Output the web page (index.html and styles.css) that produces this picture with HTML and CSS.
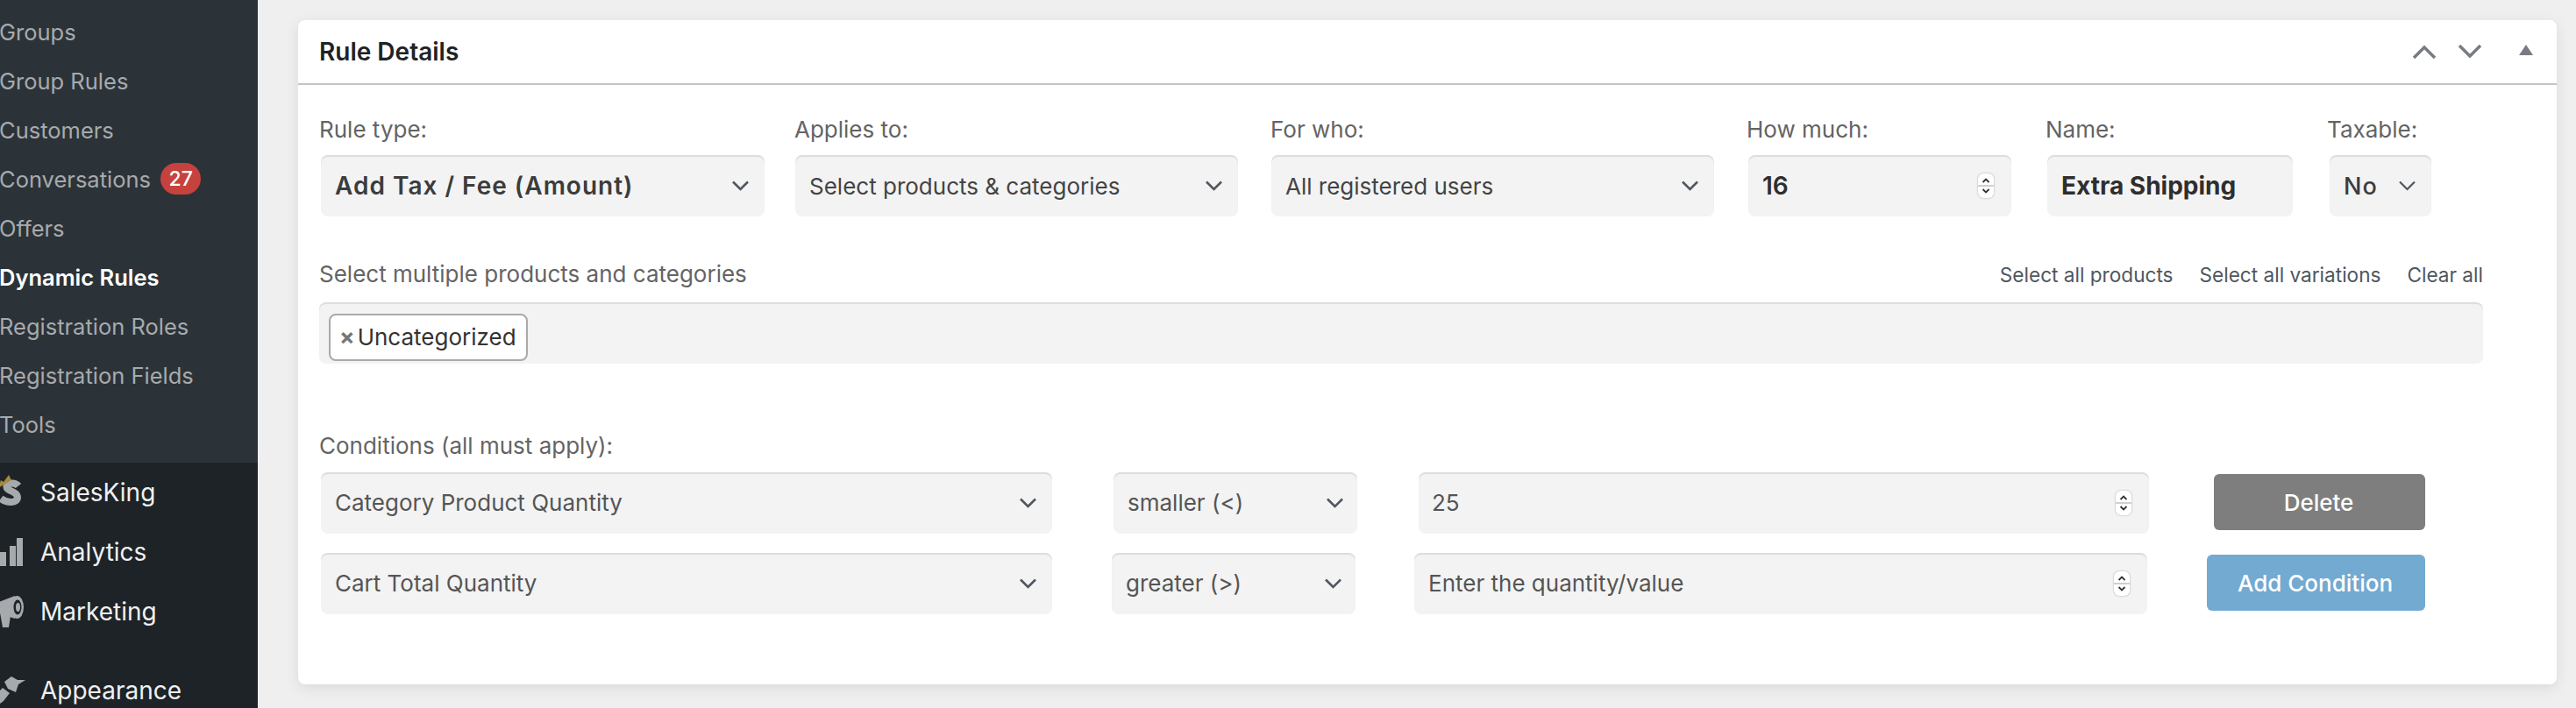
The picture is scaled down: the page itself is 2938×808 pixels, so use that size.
FILE: index.html
```html
<!DOCTYPE html>
<html lang="en">
<head>
<meta charset="utf-8">
<title>Rule Details</title>
<link rel="stylesheet" href="styles.css">
</head>
<body>
<aside class="sidebar">
  <nav class="submenu">
    <a class="sub-item">Groups</a>
    <a class="sub-item">Group Rules</a>
    <a class="sub-item">Customers</a>
    <a class="sub-item">Conversations <span class="badge">27</span></a>
    <a class="sub-item">Offers</a>
    <a class="sub-item current">Dynamic Rules</a>
    <a class="sub-item">Registration Roles</a>
    <a class="sub-item">Registration Fields</a>
    <a class="sub-item">Tools</a>
  </nav>
  <nav class="mainmenu">
    <a class="main-item">
      <svg class="menu-icon" viewBox="0 0 26 40"><path d="M21 12.500C18 8.500 9 8 7.500 13C6.500 18.500 19.500 18 20 25.500C20 32.500 8 32.500 1 27" fill="none" stroke="#a7aaad" stroke-width="8"/><path d="M-2 15L1 6L4 8L10 0L13 6Z" fill="#a68a3c"/></svg>
      <span>SalesKing</span>
    </a>
    <a class="main-item">
      <svg class="menu-icon" viewBox="0 0 26 40"><path d="M0 20h7v16H0zM11 13h7v23h-7zM19 4h7v32h-7z" fill="#a7aaad"/></svg>
      <span>Analytics</span>
    </a>
    <a class="main-item">
      <svg class="menu-icon" viewBox="0 0 26 40"><path d="M-4 10L17 2V28L-4 21Z" fill="#a7aaad"/><path d="M0 21L12 25L10 38L3 38Z" fill="#a7aaad"/><ellipse cx="19.500" cy="15" rx="7.500" ry="13" fill="#a7aaad"/><ellipse cx="20" cy="15" rx="4.500" ry="8.500" fill="#1d2327"/><ellipse cx="20.500" cy="15" rx="2.500" ry="5" fill="#a7aaad"/></svg>
      <span>Marketing</span>
    </a>
    <a class="main-item appearance">
      <svg class="menu-icon" viewBox="0 0 26 40"><path d="M5 10L13 4L20 8L29 8L21 13L18 22L9 18ZM3 17L11 23L4 32L-4 38V24Z" fill="#a7aaad"/></svg>
      <span>Appearance</span>
    </a>
  </nav>
</aside>

<main class="main">
  <section class="card">
    <header class="card-head">
      <h2 class="card-title">Rule Details</h2>
      <div class="card-actions">
        <svg class="head-chev" viewBox="0 0 28 16"><path d="M2 15L14 3L26 15" fill="none" stroke="#787c82" stroke-width="3.500"/></svg>
        <svg class="head-chev" viewBox="0 0 28 16"><path d="M2 1L14 13L26 1" fill="none" stroke="#787c82" stroke-width="3.500"/></svg>
        <svg class="head-tri" viewBox="0 0 16 12"><path d="M8 0L16 12H0Z" fill="#787c82"/></svg>
      </div>
    </header>
    <div class="card-body">
      <div class="fields">
        <div class="field f-type">
          <label class="label">Rule type:</label>
          <div class="control strong spaced"><span>Add Tax / Fee (Amount)</span><svg class="chev" viewBox="0 0 20 12"><path d="M1.500 1.500L10 10L18.500 1.500" fill="none" stroke="#50575e" stroke-width="2.600"/></svg></div>
        </div>
        <div class="field f-applies">
          <label class="label">Applies to:</label>
          <div class="control dark"><span>Select products &amp; categories</span><svg class="chev" viewBox="0 0 20 12"><path d="M1.500 1.500L10 10L18.500 1.500" fill="none" stroke="#50575e" stroke-width="2.600"/></svg></div>
        </div>
        <div class="field f-who">
          <label class="label">For who:</label>
          <div class="control dark"><span>All registered users</span><svg class="chev" viewBox="0 0 20 12"><path d="M1.500 1.500L10 10L18.500 1.500" fill="none" stroke="#50575e" stroke-width="2.600"/></svg></div>
        </div>
        <div class="field f-much">
          <label class="label">How much:</label>
          <div class="control strong num"><span>16</span><span class="spin"><svg viewBox="0 0 18 28"><path d="M5.500 10L9 6.500L12.500 10M5.500 18L9 21.500L12.500 18" fill="none" stroke="#333" stroke-width="1.800"/></svg></span></div>
        </div>
        <div class="field f-name">
          <label class="label">Name:</label>
          <div class="control strong bolder"><span>Extra Shipping</span></div>
        </div>
        <div class="field f-tax">
          <label class="label">Taxable:</label>
          <div class="control strong-med"><span>No</span><svg class="chev" viewBox="0 0 20 12"><path d="M1.500 1.500L10 10L18.500 1.500" fill="none" stroke="#50575e" stroke-width="2.200"/></svg></div>
        </div>
      </div>

      <div class="multi-head">
        <label class="label">Select multiple products and categories</label>
        <div class="links"><a>Select all products</a><a>Select all variations</a><a>Clear all</a></div>
      </div>
      <div class="multi-box">
        <span class="tag"><span class="tag-x">×</span>Uncategorized</span>
      </div>

      <label class="label cond-label">Conditions (all must apply):</label>
      <div class="cond-row first">
        <div class="control c-what"><span>Category Product Quantity</span><svg class="chev" viewBox="0 0 20 12"><path d="M1.500 1.500L10 10L18.500 1.500" fill="none" stroke="#50575e" stroke-width="2.600"/></svg></div>
        <div class="control c-op"><span>smaller (&lt;)</span><svg class="chev" viewBox="0 0 20 12"><path d="M1.500 1.500L10 10L18.500 1.500" fill="none" stroke="#50575e" stroke-width="2.600"/></svg></div>
        <div class="control c-val num"><span>25</span><span class="spin"><svg viewBox="0 0 18 28"><path d="M5.500 10L9 6.500L12.500 10M5.500 18L9 21.500L12.500 18" fill="none" stroke="#333" stroke-width="1.800"/></svg></span></div>
        <button class="btn btn-delete">Delete</button>
      </div>
      <div class="cond-row second">
        <div class="control c-what"><span>Cart Total Quantity</span><svg class="chev" viewBox="0 0 20 12"><path d="M1.500 1.500L10 10L18.500 1.500" fill="none" stroke="#50575e" stroke-width="2.600"/></svg></div>
        <div class="control c-op"><span>greater (&gt;)</span><svg class="chev" viewBox="0 0 20 12"><path d="M1.500 1.500L10 10L18.500 1.500" fill="none" stroke="#50575e" stroke-width="2.600"/></svg></div>
        <div class="control c-val num"><span>Enter the quantity/value</span><span class="spin"><svg viewBox="0 0 18 28"><path d="M5.500 10L9 6.500L12.500 10M5.500 18L9 21.500L12.500 18" fill="none" stroke="#333" stroke-width="1.800"/></svg></span></div>
        <button class="btn btn-add">Add Condition</button>
      </div>
    </div>
  </section>
</main>
</body>
</html>
```

FILE: styles.css
```css
* { box-sizing: border-box; }
html, body { margin: 0; height: 808px; overflow: hidden; }
body {
  display: flex;
  background: #efefef;
  font-family: Inter, "Liberation Sans", sans-serif;
  font-size: 28px;
  color: #555;
}

/* Sidebar */
.sidebar { width: 294px; flex: none; background: #1d2327; height: 808px; overflow: hidden; }
.submenu { background: #2c3338; padding: 8px 0 16px; }
.sub-item { display: flex; align-items: center; height: 56px; margin-left: -1px; font-size: 25.500px; color: #a7aaad; white-space: pre; }
.sub-item.current { color: #fff; font-weight: 600; }
.badge {
  display: inline-block; margin-left: 4px; height: 36px; min-width: 46px; padding: 0 9px;
  border-radius: 18px; background: #c5423f; color: #fff; font-size: 23px; font-weight: 500;
  line-height: 36px; text-align: center;
}
.main-item { display: flex; align-items: center; gap: 20px; height: 68px; font-size: 28px; color: #f0f0f1; }
.main-item.appearance { margin-top: 22px; }
.menu-icon { width: 26px; height: 40px; flex: none; overflow: visible; }

/* Card */
.main { flex: 1; padding: 23px 22px 0 46px; }
.card {
  height: 758px; background: #fff; border-radius: 8px;
  box-shadow: 0 4px 16px rgba(0, 0, 0, .09);
}
.card-head {
  display: flex; align-items: center; justify-content: space-between;
  height: 74px; padding: 0 27px 0 24px; border-bottom: 2px solid #c3c4c7;
}
.card-title { margin: 0; font-size: 28px; font-weight: 600; color: #1d2327; }
.card-actions { display: flex; align-items: center; }
.head-chev { width: 28px; height: 16px; margin-right: 24px; }
.head-chev + .head-chev { margin-right: 42px; }
.head-tri { width: 16px; height: 12px; margin-bottom: 4px; }
.card-body { padding: 34px 0 0 25px; }

.label { display: block; height: 34px; line-height: 34px; margin-left: -1px; font-size: 26px; color: #646464; white-space: nowrap; }

.fields { display: flex; }
.f-type { width: 541px; }
.f-applies { width: 543px; }
.f-who { width: 544px; }
.f-much { width: 341px; }
.f-name { width: 320px; }
.f-type .control { width: 506px; }
.f-applies .control { width: 505px; }
.f-who .control { width: 505px; }
.f-much .control { width: 300px; }
.f-name .control { width: 280px; }
.f-tax .control { width: 116px; margin-left: 3px; }
.field .label { margin-bottom: 12px; }
.f-applies .label, .f-who .label, .f-tax .label { margin-left: 0; }

.control {
  display: flex; align-items: center; justify-content: space-between;
  height: 70px; margin-left: 1px; padding: 0 17px 0 16px;
  background: #f3f3f3; border-radius: 8px;
  box-shadow: inset 0 2px 1px #dcdcdc;
  font-size: 26px; color: #555; white-space: nowrap;
}
.control.strong { font-weight: 600; font-size: 28px; color: #2e2e2e; }
.control.bolder { font-weight: 700; }
.control.spaced { letter-spacing: 1px; color: #3c3c3c; }
.control.dark { color: #444; }
.control.strong-med { font-weight: 500; font-size: 27px; color: #3c3c3c; letter-spacing: 1px; }
.chev { width: 21px; height: 12px; flex: none; }
.control.num { padding-right: 20px; }
.c-what > span, .c-op > span, .c-val > span:first-child { margin-top: -2px; }
.spin {
  position: relative; width: 18px; height: 28px; flex: none; background: #fff; border-radius: 6px;
  box-shadow: 0 0 2px #999; display: flex;
}
.spin::after { content: ""; position: absolute; left: 0; right: 0; top: 13px; height: 2px; background: #cfcfcf; }
.spin svg { width: 18px; height: 28px; }

.multi-head {
  display: flex; justify-content: space-between; align-items: center;
  width: 2467px; margin-top: 49px; margin-bottom: 15px;
}
.links { display: flex; gap: 30px; font-size: 22.600px; color: #50575e; }
.multi-box {
  width: 2468px; height: 70px; margin-left: -1px; padding: 13px 0 0 11px;
  background: #f3f3f3; border-radius: 8px; box-shadow: inset 0 2px 1px #dcdcdc;
}
.tag {
  display: inline-block; height: 54px; width: 227px; line-height: 50px; padding-left: 10px;
  background: #fff; border: 2px solid #a9a9a9; border-radius: 8px;
  font-size: 26px; color: #333; white-space: nowrap;
}
.tag-x { margin-right: 3px; color: #777; font-weight: 700; }

.cond-label { margin-top: 77px; margin-bottom: 13px; }
.cond-row { display: flex; align-items: flex-start; }
.cond-row.second { margin-top: 22px; }
.c-what { width: 834px; }
.c-op { width: 278px; }
.first .c-op { margin-left: 70px; }
.first .c-val { width: 833px; margin-left: 70px; padding-left: 15px; }
.second .c-op { margin-left: 68px; }
.second .c-val { width: 836px; margin-left: 67px; padding-left: 16px; }
.c-op { padding-right: 15px; }

.btn {
  height: 64px; margin-top: 2px; border: 0; border-radius: 6px; color: #fff;
  font-family: inherit; font-size: 26px; font-weight: 500; padding: 0 2px 0 0;
}
.btn-delete { width: 241px; margin-left: 74px; background: #7e7e7e; }
.btn-add { width: 249px; margin-left: 68px; background: #72aad1; }
```
